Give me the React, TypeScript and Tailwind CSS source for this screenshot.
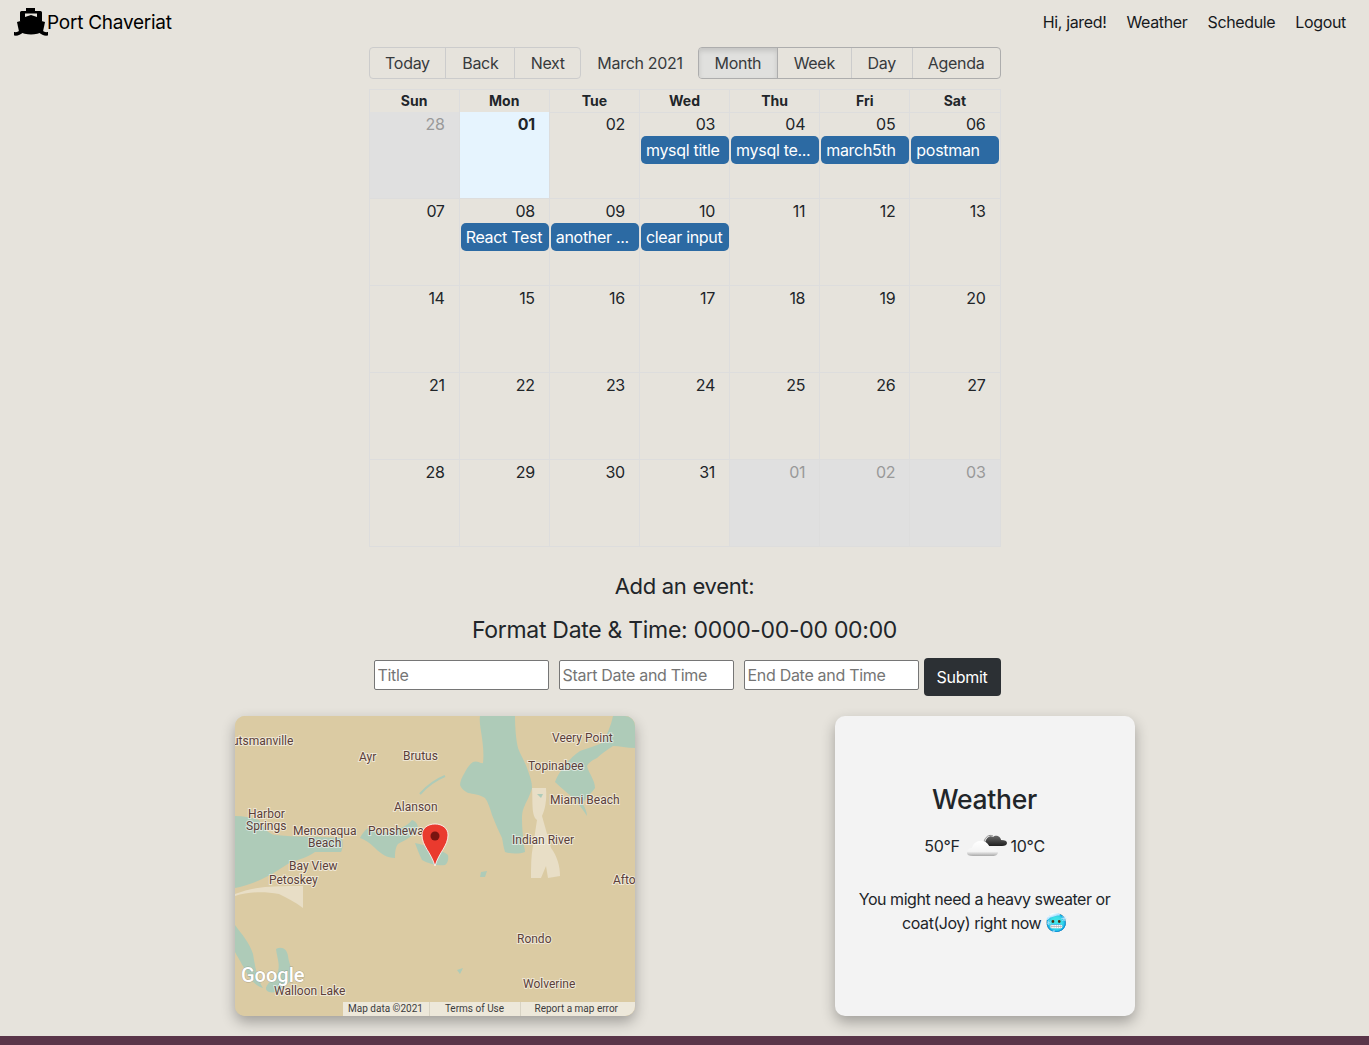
import { CSSProperties } from 'react';

const weeks = [
  ['28', '01', '02', '03', '04', '05', '06'],
  ['07', '08', '09', '10', '11', '12', '13'],
  ['14', '15', '16', '17', '18', '19', '20'],
  ['21', '22', '23', '24', '25', '26', '27'],
  ['28', '29', '30', '31', '01', '02', '03'],
];

const events: Record<string, string> = {
  '0-3': 'mysql title',
  '0-4': 'mysql te...',
  '0-5': 'march5th',
  '0-6': 'postman',
  '1-1': 'React Test',
  '1-2': 'another ...',
  '1-3': 'clear input',
};

const days = ['Sun', 'Mon', 'Tue', 'Wed', 'Thu', 'Fri', 'Sat'];

const labels: [string, number, number][] = [
  ['utsmanville', -3, 29],
  ['Ayr', 124, 45],
  ['Brutus', 168, 44],
  ['Veery Point', 317, 26],
  ['Topinabee', 293, 54],
  ['Alanson', 159, 95],
  ['Miami Beach', 315, 88],
  ['Harbor', 13, 102],
  ['Springs', 11, 114],
  ['Menonaqua', 58, 119],
  ['Beach', 73, 131],
  ['Ponshewa', 133, 119],
  ['Indian River', 277, 128],
  ['Bay View', 54, 154],
  ['Petoskey', 34, 168],
  ['Afto', 378, 168],
  ['Rondo', 282, 227],
  ['Wolverine', 288, 272],
  ['Walloon Lake', 39, 279],
];

function ShipIcon() {
  return (
    <svg viewBox="0 0 34 28" className="w-[34px] h-[28px]" fill="#000">
      <path d="M12 0h9v3h-9z" />
      <path d="M7.500 3h19A1.500 1.500 0 0 1 28 4.500V13H6V4.500A1.500 1.500 0 0 1 7.500 3z" />
      <path d="M3 14L17 10l14 4-2 9.500c-3 2-8 3-12 3s-9-1-12-3z" />
      <path d="M0 24c3 .5 4.500-.5 6.500-2l2.500 2.500C6.500 27 3.500 28 0 27.500zM34 24c-3 .5-4.500-.5-6.500-2L25 24.500c2.500 2.500 5.500 3.500 9 3z" />
      <path d="M11 5.500h12V9l-6-2-6 2z" fill="#e6e3dc" />
    </svg>
  );
}

function MapPanel() {
  const water = '#aecbb8';
  const town = '#e8dec6';
  const halo: CSSProperties = { paintOrder: 'stroke', stroke: 'rgba(255,255,255,0.55)', strokeWidth: 2, letterSpacing: 'normal' };
  return (
    <div className="relative w-[400px] h-[300px] rounded-[10px] overflow-hidden shadow-[0_6px_14px_rgba(0,0,0,0.3)] bg-[#dbcba3]">
      <svg viewBox="0 0 400 300" className="block w-full h-full">
        <rect width="400" height="300" fill="#dbcba3" />
        {/* Burt Lake */}
        <path d="M245 0L280 0C280 12 281 24 283 32C286 40 290 46 292 52C295 60 297 66 297 72C295 80 291 86 290 89C287 95 287 99 287 104C287 112 288 118 288 122C288 128 290 132 290 136C284 138 276 138 270 136C268 130 268 126 267 122C263 114 260 106 257 99C255 92 253 86 250 82C244 78 238 78 233 77C229 75 226 72 225 69C226 62 228 60 230 56C232 52 235 48 238 46C242 44 246 48 248 47C249 38 248 30 247 22C246 14 244 6 245 0Z" fill={water} />
        {/* Mullett Lake */}
        <path d="M378 0L400 0L400 32C392 32 384 30 378 30C372 34 366 38 362 42C358 44 354 46 352 50C354 58 360 64 360 72C356 78 350 82 348 88C350 92 352 96 352 100C348 94 344 88 340 84C334 78 326 72 320 66C322 60 326 54 330 50C334 44 340 38 345 35C352 32 362 30 368 26C372 18 376 10 378 0Z" fill={water} />
        {/* Little Traverse Bay */}
        <path d="M0 100C10 100 18 102 24 104C28 112 34 118 40 119C56 121 74 120 107 122C108 128 108 132 106 136C98 136 88 136 80 136C72 142 62 144 56 146C46 152 38 158 33 160C22 166 10 170 0 172Z" fill={water} />
        {/* Crooked Lake */}
        <path d="M125 122C128 116 132 112 134 112C142 118 150 118 160 114C168 112 174 108 177 104C182 106 184 110 182 114C176 122 170 124 163 128C160 132 160 138 160 142C152 142 146 138 140 132C134 126 130 124 125 122Z" fill={water} />
        <path d="M180 127C186 128 192 130 197 132C204 134 210 136 213 139C214 144 212 148 210 149C202 150 194 148 187 144C184 138 182 132 180 127Z" fill={water} />
        <path d="M185 78C192 70 200 64 210 60" stroke={water} strokeWidth="2" fill="none" />
        {/* Lower left lakes */}
        <path d="M0 209C8 220 14 226 18 238C20 250 22 262 28 272C20 270 14 262 10 254C6 246 2 240 0 236Z" fill={water} />
        <path d="M41 233C46 230 52 232 53 240C54 250 60 256 56 264C50 272 42 278 34 276C26 272 36 266 42 258C46 250 42 242 41 233Z" fill={water} />
        {/* Town patches */}
        <path d="M297 72L311 72C312 84 310 94 307 100L316 132C322 140 325 150 325 160L313 162L311 150L306 162L296 162C296 150 296 140 298 130L302 104C296 100 298 84 297 72Z" fill={town} />
        <path d="M0 178C10 174 20 172 30 171C44 170 54 170 68 170L68 192C60 186 52 182 44 178C28 175 12 176 0 180Z" fill={town} />
        <path d="M246 156l6-1-2 6-5 0zM222 254l6-2-3 6zM302 78l6 0-2 4z" fill={water} />
        {labels.map(([text, x, y]) => (
          <text key={text + x} x={x} y={y} fontSize="12" fill="#5b3f3a" fontFamily="Roboto, sans-serif" style={halo}>
            {text}
          </text>
        ))}
        <text x="6" y="266" fontSize="20" fontWeight="500" fill="#fff" fontFamily="Roboto, sans-serif" style={{ paintOrder: 'stroke', stroke: 'rgba(90,90,90,0.35)', strokeWidth: 1, letterSpacing: 'normal' }}>
          Google
        </text>
        <path d="M200 150C196 136 187 130 187 119C187 112 193 108 200 108C207 108 213 112 213 119C213 130 204 136 200 150Z" fill="#ea3a2e" stroke="#fff" strokeWidth="0.8" />
        <circle cx="200" cy="120" r="4.500" fill="#7a1410" />
      </svg>
      <div className="absolute right-0 bottom-0 w-[292px] h-[14px] flex bg-[#ede8da] text-[10px] tracking-normal leading-[14px] text-[#3c3c3c] font-['Roboto',sans-serif]">
        <span className="w-[87px] text-center border-r border-[#d8d3c4]">Map data ©2021</span>
        <span className="w-[91px] text-center border-r border-[#d8d3c4]">Terms of Use</span>
        <span className="w-[114px] pl-[14px]">Report a map error</span>
      </div>
    </div>
  );
}

function CloudIcon() {
  return (
    <svg viewBox="0 0 42 24" className="w-[42px] h-[24px]">
      <defs>
        <linearGradient id="darkCloud" x1="0" x2="0" y1="0" y2="1">
          <stop offset="0" stopColor="#6a6a6a" />
          <stop offset="1" stopColor="#1f1f1f" />
        </linearGradient>
        <linearGradient id="lightCloud" x1="0" x2="0" y1="0" y2="1">
          <stop offset="0" stopColor="#ffffff" />
          <stop offset="0.7" stopColor="#f4f4f4" />
          <stop offset="1" stopColor="#a9a9a9" />
        </linearGradient>
      </defs>
      <path d="M19 9C20 4 24 1 27 3C30 0 35 3 35 6C39 6 41 7 41 9C41 11 39 12 36 12L22 12C20 12 19 11 19 9Z" fill="url(#darkCloud)" />
      <path d="M18 8C19 3 23 0 27 2" fill="none" stroke="#777777" strokeWidth="0.8" />
      <path d="M1 19C1 16 3 14 6 14C7 9 12 6 17 7C21 8 23 11 24 14C28 13 32 15 32 18C32 21 29 22 27 22L7 22C3 22 1 21 1 19Z" fill="url(#lightCloud)" />
    </svg>
  );
}

export default function App() {
  return (
    <div className="min-h-[1045px] bg-[#e6e3dc] flex flex-col text-[#212529] font-['Inter',sans-serif] text-base tracking-[-0.3px]">
      <nav className="h-[47px] pt-[7px] pl-[14px] pr-[23px] flex items-start justify-between">
        <div className="flex items-center h-[30px]">
          <ShipIcon />
          <span className="text-[19px] tracking-[-0.25px] text-black pt-[2px] ml-[-1px]">Port Chaveriat</span>
        </div>
        <div className="flex gap-5 h-[30px] items-center text-[#16191c] tracking-[-0.35px]">
          <span>Hi, jared!</span>
          <span>Weather</span>
          <span>Schedule</span>
          <span>Logout</span>
        </div>
      </nav>

      <div className="w-[632px] mx-auto">
        {/* Toolbar */}
        <div className="h-8 flex items-stretch text-[#373a3c]">
          <div className="flex border border-[#cccccc] rounded-[4px] overflow-hidden">
            <span className="w-[77px] flex items-center justify-center border-r border-[#cccccc]">Today</span>
            <span className="w-[69px] flex items-center justify-center border-r border-[#cccccc]">Back</span>
            <span className="w-[65px] flex items-center justify-center">Next</span>
          </div>
          <span className="w-[118px] flex items-center justify-center">March 2021</span>
          <div className="flex border border-[#adadad] rounded-[4px] overflow-hidden ml-[-1px]">
            <span className="w-[79px] flex items-center justify-center bg-[#e0e0de] border-r border-[#adadad] shadow-[inset_0_3px_5px_rgba(0,0,0,0.125)]">Month</span>
            <span className="w-[74px] flex items-center justify-center border-r border-[#cccccc]">Week</span>
            <span className="w-[61px] flex items-center justify-center border-r border-[#cccccc]">Day</span>
            <span className="w-[87px] flex items-center justify-center">Agenda</span>
          </div>
        </div>

        {/* Calendar */}
        <div className="mt-[10px] border-t border-r border-b border-[#dddddd]">
          <div className="grid grid-cols-7 h-[22px]">
            {days.map((d) => (
              <div key={d} className="text-center text-sm font-bold tracking-normal leading-[22px] border-b border-l border-[#dddddd]">
                {d}
              </div>
            ))}
          </div>
          {weeks.map((week, w) => (
            <div key={w} className={`relative grid grid-cols-7 ${w > 0 ? 'h-[87px] border-t border-[#dddddd]' : 'h-[86px]'}`}>
              {week.map((date, d) => {
                const off = (w === 0 && d === 0) || (w === 4 && d > 3);
                const today = w === 0 && d === 1;
                const title = events[`${w}-${d}`];
                return (
                  <div
                    key={d}
                    className={`relative pl-[1px] border-l border-[#dddddd] ${off ? 'bg-[#e0e0e0]' : ''} ${today ? 'bg-[#e6f4fe]' : ''}`}
                  >
                    <div className={`h-[24px] pr-[14px] text-right leading-[24px] ${off ? 'text-[#999999]' : ''} ${today ? 'font-bold' : ''}`}>
                      {date}
                    </div>
                    {title && (
                      <div className="w-[88px] h-7 px-[5px] rounded-[5px] bg-[#2c6aa3] text-white leading-[28px] whitespace-nowrap overflow-hidden">
                        {title}
                      </div>
                    )}
                  </div>
                );
              })}
            </div>
          ))}
        </div>
      </div>

      {/* Add event */}
      <div className="mt-[25px] flex flex-col items-center">
        <h4 className="text-[22px] leading-[28px]">Add an event:</h4>
        <h4 className="text-[23px] leading-[30px] mt-[15px]">Format Date &amp; Time: 0000-00-00 00:00</h4>
        <div className="mt-[13px] w-[632px] flex items-start">
          <input placeholder="Title" className="mt-[2px] ml-[5px] w-[175px] h-[30px] px-[3px] bg-white border border-[#767676] rounded-[2px] placeholder:text-[#757575]" />
          <input placeholder="Start Date and Time" className="mt-[2px] ml-[10px] w-[175px] h-[30px] px-[3px] bg-white border border-[#767676] rounded-[2px] placeholder:text-[#757575]" />
          <input placeholder="End Date and Time" className="mt-[2px] ml-[10px] w-[175px] h-[30px] px-[3px] bg-white border border-[#767676] rounded-[2px] placeholder:text-[#757575]" />
          <button className="ml-[5px] w-[77px] h-[38px] bg-[#2c3034] text-white rounded-[4px]">Submit</button>
        </div>
      </div>

      {/* Map and weather */}
      <div className="mt-5 flex justify-center gap-[200px]">
        <MapPanel />
        <div className="w-[300px] h-[300px] rounded-[10px] bg-[#f3f3f3] shadow-[0_6px_14px_rgba(0,0,0,0.3)] px-4 pt-[64px] text-center">
          <h3 className="text-[26.5px] leading-[38px] font-medium">Weather</h3>
          <div className="mt-[16px] flex items-center justify-center gap-[6px] h-6">
            <span>50°F</span>
            <CloudIcon />
            <span className="ml-[-3px]">10°C</span>
          </div>
          <p className="mt-[29px] leading-6 tracking-[-0.45px]">
            You might need a heavy sweater or coat(Joy) right now <span className="text-lg leading-6">🥶</span>
          </p>
        </div>
      </div>

      <div className="mt-5 flex-1 min-h-[9px] bg-[#5a3549]" />
    </div>
  );
}
